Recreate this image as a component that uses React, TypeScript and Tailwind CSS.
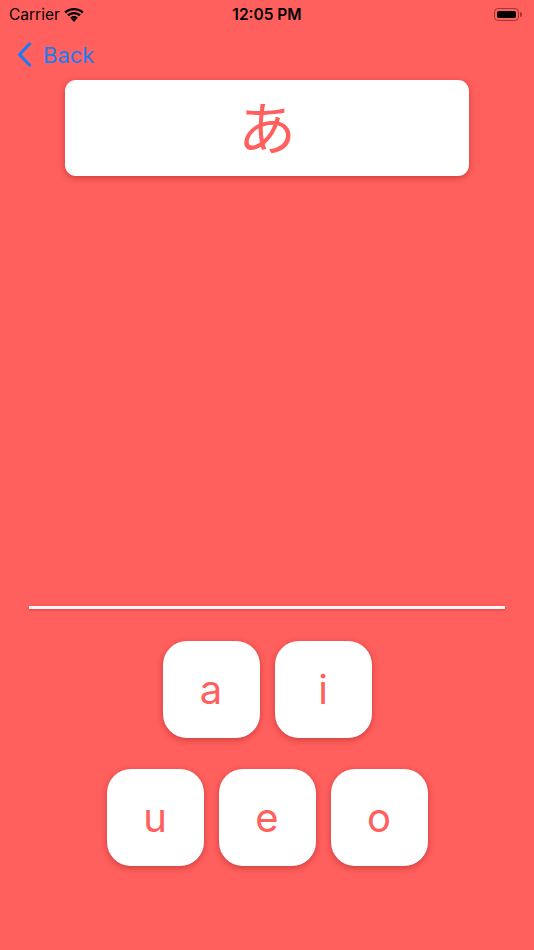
import React from "react";

const rows = [["a", "i"], ["u", "e", "o"]];

function Wifi() {
    return (
        <svg width="20" height="14" viewBox="0 0 20 14" fill="#000">
            <path d="M10 2.2c3.1 0 5.9 1.2 8 3.2l1.6-1.7C17 1.3 13.7 0 10 0S3 1.3.4 3.7L2 5.4c2.1-2 4.9-3.2 8-3.2z"/>
            <path d="M10 6.2c2 0 3.8.8 5.2 2.1l1.6-1.7C15 4.9 12.6 4 10 4S5 4.9 3.2 6.6l1.6 1.7C6.2 7 8 6.2 10 6.2z"/>
            <path d="M10 10.2c1 0 1.8.4 2.5 1l-2.5 2.7-2.5-2.7c.7-.6 1.5-1 2.5-1z"/>
            <path d="M10 8c1.5 0 2.8.6 3.9 1.5l-1.4 1.6A3.6 3.6 0 0 0 10 10.2c-1 0-1.8.4-2.5.9L6.1 9.5C7.2 8.6 8.5 8 10 8z"/>
        </svg>
    );
}

function Battery() {
    return (
        <div className="flex items-center">
            <div className="w-[25px] h-[13px] rounded-[4px] border border-black/40 p-[2px]">
                <div className="w-full h-full rounded-[2px] bg-black"/>
            </div>
            <div className="w-[2px] h-[5px] rounded-r-sm bg-black/40 ml-[1px]"/>
        </div>
    );
}

export default function App() {
    return (
        <div
            className="w-full h-[950px] bg-[#ff5f5d] flex flex-col overflow-hidden"
            style={{fontFamily: "Inter, 'Liberation Sans', 'Noto Sans CJK JP', sans-serif"}}
        >
            {/* status bar */}
            <div className="h-[28px] relative flex items-center px-[9px]">
                <span className="text-[15.5px] text-black leading-none mt-[1px]">Carrier</span>
                <span className="ml-[4px] mt-[1px]"><Wifi/></span>
                <span className="absolute left-0 right-0 text-center text-[15.5px] font-semibold text-black leading-none mt-[1px]">
                    12:05 PM
                </span>
                <div className="ml-auto mr-[3px]"><Battery/></div>
            </div>

            {/* nav bar */}
            <div className="h-[52px] flex items-center pl-[17px] pt-[1px]">
                <svg width="15" height="25" viewBox="0 0 15 25" fill="none" stroke="#1a7cf5" strokeWidth="3.2"
                     strokeLinecap="round" strokeLinejoin="round">
                    <path d="M12.5 2 2.5 12.5l10 10.5"/>
                </svg>
                <span className="ml-[11px] text-[22px] text-[#1a7cf5] leading-none">Back</span>
            </div>

            {/* kana card */}
            <div className="mx-auto w-[404px] h-[96px] bg-white rounded-[11px] shadow-[0_2px_6px_rgba(120,0,0,0.35)] flex items-center justify-center">
                <span
                    className="text-[58px] text-[#ff5f5d] leading-none -mt-[6px]"
                    style={{fontFamily: "'Noto Sans CJK JP', sans-serif"}}
                >
                    あ
                </span>
            </div>

            {/* divider */}
            <div className="mt-[430px] mx-auto w-[476px] h-[3px] bg-white/95 shadow-[0_1px_3px_rgba(120,0,0,0.3)]"/>

            {/* answer buttons */}
            <div className="mt-[32px] flex flex-col items-center gap-[31px]">
                {rows.map((row, i) => (
                    <div key={i} className="flex gap-[15px]">
                        {row.map((ch) => (
                            <button
                                key={ch}
                                className="w-[97px] h-[97px] bg-white rounded-[24px] shadow-[0_2px_6px_rgba(120,0,0,0.35)] flex items-center justify-center"
                            >
                                <span className="text-[40px] text-[#ff5f5d] leading-none">{ch}</span>
                            </button>
                        ))}
                    </div>
                ))}
            </div>
        </div>
    );
}
